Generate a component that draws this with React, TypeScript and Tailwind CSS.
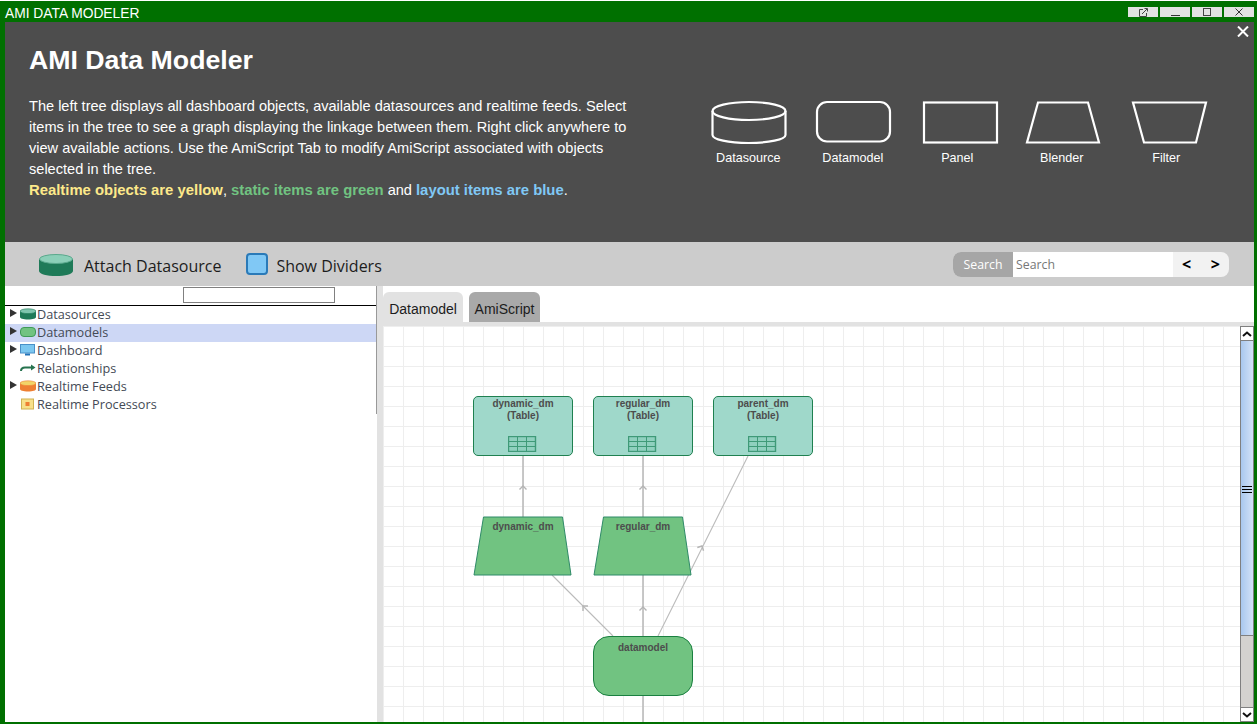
import { ReactNode } from "react";

const treeRows = [
  { label: "Datasources", arrow: true, icon: "datasource" },
  { label: "Datamodels", arrow: true, icon: "datamodel", selected: true },
  { label: "Dashboard", arrow: true, icon: "dashboard" },
  { label: "Relationships", arrow: false, icon: "relationship" },
  { label: "Realtime Feeds", arrow: true, icon: "feed" },
  { label: "Realtime Processors", arrow: false, icon: "processor" },
];

function TreeIcon({ name }: { name: string }) {
  if (name === "datasource" || name === "feed") {
    const top = name === "feed" ? "#f2d468" : "#7fc5ae";
    const body = name === "feed" ? "#ee7f33" : "#1f7a58";
    return (
      <svg width="16" height="12" viewBox="0 0 16 12">
        <path d="M0 3v6c0 1.5 3 2.5 8 2.5s8-1 8-2.5V3z" fill={body} />
        <ellipse cx="8" cy="3.2" rx="8" ry="2.4" fill={top} stroke={body} strokeWidth="0.6" />
      </svg>
    );
  }
  if (name === "datamodel") {
    return (
      <svg width="16" height="12" viewBox="0 0 16 12">
        <rect x="0.5" y="1.5" width="15" height="9" rx="3.5" fill="#71c381" stroke="#3f9a57" />
      </svg>
    );
  }
  if (name === "dashboard") {
    return (
      <svg width="16" height="12" viewBox="0 0 16 12">
        <rect x="0.5" y="0.5" width="14" height="8.5" fill="#7cc7f0" stroke="#4a90c8" />
        <rect x="5" y="9.5" width="5" height="2" fill="#2273b8" />
      </svg>
    );
  }
  if (name === "relationship") {
    return (
      <svg width="16" height="12" viewBox="0 0 16 12">
        <path d="M1 9c0-3 2-3.5 4-3.5h7" fill="none" stroke="#27734f" strokeWidth="2" />
        <path d="M11 2.5 15.5 5.5 11 8.5z" fill="#27734f" />
      </svg>
    );
  }
  return (
    <svg width="14" height="12" viewBox="0 0 14 12" className="ml-[1px]">
      <rect x="0.5" y="1" width="12" height="10" fill="#f7e08a" stroke="#d0b253" />
      <rect x="4.5" y="4" width="4" height="4" fill="#ee7f33" />
    </svg>
  );
}

function LegendItem({ label, children }: { label: string; children: ReactNode }) {
  return (
    <div className="flex w-[104.5px] flex-col items-center">
      <svg width="84" height="46" viewBox="0 0 84 46" fill="none" stroke="#ffffff" strokeWidth="2.2">
        {children}
      </svg>
      <span className="mt-[4px] text-[12.6px] leading-[16px] text-white">{label}</span>
    </div>
  );
}

function TableNode({ name, className }: { name: string; className: string }) {
  return (
    <div
      className={`absolute top-[70px] h-[60px] w-[100px] rounded-[5px] border border-[#1f8050] bg-[#9fd8ca] pt-[1px] text-center text-[10px] leading-[12px] font-bold text-[#4d4d4d] ${className}`}
    >
      <div>{name}</div>
      <div>(Table)</div>
      <svg className="absolute top-[39px] left-[34px]" width="29" height="16" viewBox="0 0 29 16" fill="none" stroke="#3f9a78">
        <rect x="0.5" y="0.5" width="27" height="15" fill="#8fd0be" strokeWidth="1.4" />
        <path d="M0 5.5h28M0 10.5h28M9.5 0v16M18.5 0v16" />
      </svg>
    </div>
  );
}

function BlenderNode({ name, className }: { name: string; className: string }) {
  return (
    <div className={`absolute top-[190px] h-[60px] w-[100px] text-center ${className}`}>
      <svg className="absolute top-0 left-0" width="100" height="60" viewBox="0 0 100 60">
        <path d="M10.5 1H89.5L98 59H1z" fill="#71c381" stroke="#2f8a68" />
      </svg>
      <span className="relative block pt-[5px] text-[10px] leading-[12px] font-bold text-[#4d4d4d]">{name}</span>
    </div>
  );
}

function Arrow({ x, y, angle }: { x: number; y: number; angle: number }) {
  return (
    <path
      d="M-3.5 3.5 0 0 3.5 3.5"
      fill="none"
      stroke="#b4b4b4"
      strokeWidth="1.4"
      transform={`translate(${x} ${y}) rotate(${angle})`}
    />
  );
}

export default function App() {
  return (
    <div
      className="flex h-[724px] w-[1257px] flex-col overflow-hidden bg-white pt-[1px] text-[#333]"
      style={{ fontFamily: '"Liberation Sans", Arial, sans-serif' }}
    >
      <div className="flex h-[723px] flex-col border-r-[3px] border-b-[2px] border-l-[5px] border-[#007000] bg-white">
        {/* window title */}
        <div className="-ml-[5px] flex h-[21px] shrink-0 items-center justify-between bg-[#007000] pl-[5px]">
          <span className="pt-[5px] text-[13.8px] leading-[22px] text-white">AMI DATA MODELER</span>
          <div className="mt-[1px] flex gap-[2px] text-[#333]">
            <div className="flex h-[10px] w-[30px] items-center justify-center bg-[#e2e2e2]">
              <svg width="9" height="9" viewBox="0 0 9 9" fill="none" stroke="#444">
                <path d="M4 1.5H.5v7h7V5M3 6l5-5M5.5.5h3v3" />
              </svg>
            </div>
            <div className="flex h-[10px] w-[30px] items-end justify-center bg-[#e2e2e2] pb-[1px]">
              <div className="h-[1px] w-[9px] bg-[#333]" />
            </div>
            <div className="flex h-[10px] w-[30px] items-center justify-center bg-[#e2e2e2]">
              <div className="h-[8px] w-[8px] border border-[#444]" />
            </div>
            <div className="flex h-[10px] w-[30px] items-center justify-center bg-[#e2e2e2]">
              <svg width="8" height="8" viewBox="0 0 8 8" stroke="#333">
                <path d="M.5.5l7 7M7.5.5l-7 7" />
              </svg>
            </div>
          </div>
        </div>

        {/* help banner */}
        <div className="relative flex h-[220px] shrink-0 bg-[#4d4d4d] text-white">
          <svg className="absolute top-[4px] right-[5px]" width="12" height="11" viewBox="0 0 12 11" stroke="#ffffff" strokeWidth="2">
            <path d="M1 .5l10 10M11 .5 1 10.500" />
          </svg>
          <div className="w-[640px] pt-[20px] pl-[24px]">
            <h1 className="text-[26.7px] leading-[36px] font-bold">AMI Data Modeler</h1>
            <p className="mt-[18px] text-[14.57px] leading-[21px]">
              The left tree displays all dashboard objects, available datasources and realtime feeds. Select
              <br />
              items in the tree to see a graph displaying the linkage between them. Right click anywhere to
              <br />
              view available actions. Use the AmiScript Tab to modify AmiScript associated with objects
              <br />
              selected in the tree.
              <br />
              <b className="text-[14.85px] text-[#fde98a]">Realtime objects are yellow</b>,{" "}
              <b className="text-[14.85px] text-[#71c381]">static items are green</b> and{" "}
              <b className="text-[14.85px] text-[#80c8f5]">layout items are blue</b>.
            </p>
          </div>
          <div className="absolute top-[78px] left-[691px] flex">
            <LegendItem label="Datasource">
              <path d="M6.500 11v24c0 4.500 16 8 36 8s37-3.500 37-8V11" />
              <ellipse cx="43" cy="11" rx="36.500" ry="9" />
            </LegendItem>
            <LegendItem label="Datamodel">
              <rect x="6" y="2" width="73" height="39.500" rx="10" />
            </LegendItem>
            <LegendItem label="Panel">
              <rect x="9" y="2.500" width="73" height="40" />
            </LegendItem>
            <LegendItem label="Blender">
              <path d="M18 2.500H68L79 42.500H7z" />
            </LegendItem>
            <LegendItem label="Filter">
              <path d="M9 2.500H82L72 42.500H20z" />
            </LegendItem>
          </div>
        </div>

        {/* toolbar */}
        <div
          className="flex h-[44px] shrink-0 items-center bg-[#cccccc] pr-[25px] pl-[34px] text-[16px] text-[#1c1c1c]"
          style={{ fontFamily: '"Open Sans", sans-serif' }}
        >
          <svg width="34" height="22" viewBox="0 0 34 22" className="mt-[1px]">
            <path d="M0 5v12c0 3 8 5 17 5s17-2 17-5V5z" fill="#1f7a58" />
            <ellipse cx="17" cy="5" rx="16.500" ry="4.500" fill="#8ccfb8" stroke="#5aa88c" />
          </svg>
          <span className="ml-[11px] pt-[3px]">Attach Datasource</span>
          <div className="ml-[25px] h-[22px] w-[22px] rounded-[4px] border-2 border-[#2a7ab8] bg-[#80c8f5]" />
          <span className="ml-[8px] pt-[3px]">Show Dividers</span>
          <div className="ml-auto flex h-[25px] w-[276px] overflow-hidden rounded-[8px] bg-[#f2f2f2] text-[12.3px]">
            <div className="flex w-[60px] items-center justify-center bg-[#a6a6a6] pt-[3px] text-white">Search</div>
            <div className="flex w-[160px] items-center bg-white pt-[3px] pl-[3px] text-[#777]">Search</div>
            <div className="flex flex-1 items-center justify-between pr-[9px] pl-[9px] text-[16px] font-bold text-black">
              <span>&lt;</span>
              <span>&gt;</span>
            </div>
          </div>
        </div>

        <div className="flex min-h-0 flex-1">
          {/* tree pane */}
          <div className="relative w-[372px] shrink-0 overflow-hidden">
            <div className="flex h-[20px] justify-start border-b border-black pt-[1px] pl-[178px]">
              <div className="h-[16px] w-[152px] border border-[#808080] bg-white" />
            </div>
            <div className="text-[12.7px] leading-[18px]" style={{ fontFamily: '"Open Sans", sans-serif' }}>
              {treeRows.map((row) => (
                <div
                  key={row.label}
                  className={`flex h-[18px] items-center pb-[2px] pl-[5px] text-[#444a55] ${row.selected ? "bg-[#cdd7f5]" : ""}`}
                >
                  <div className="mb-[3px] w-[10px]">
                    {row.arrow && (
                      <svg width="8" height="8" viewBox="0 0 8 8">
                        <path d="M0 0 7 4 0 8z" fill="#333" />
                      </svg>
                    )}
                  </div>
                  <div className="flex w-[17px] items-center">
                    <TreeIcon name={row.icon} />
                  </div>
                  <span>{row.label}</span>
                </div>
              ))}
            </div>
            <div className="absolute top-0 right-0 h-[128px] w-[1px] bg-[#999]" />
          </div>
          <div className="w-[6px] shrink-0 bg-[#e2e2e2]" />

          {/* graph pane */}
          <div className="flex min-w-0 flex-1 flex-col">
            <div className="flex h-[36px] shrink-0 items-end gap-[6px] bg-white text-[14px] text-[#1c1c1c]">
              <div className="flex h-[30px] w-[80px] items-center justify-center rounded-t-[6px] bg-[#e2e2e2] pt-[4px]">Datamodel</div>
              <div className="flex h-[30px] w-[71px] items-center justify-center rounded-t-[6px] bg-[#a9a9a9] pt-[4px]">AmiScript</div>
            </div>
            <div className="h-[4px] shrink-0 bg-[#e2e2e2]" />
            <div className="flex min-h-0 flex-1">
              <div className="relative flex-1 overflow-hidden bg-white bg-[linear-gradient(#eeeeee_1px,transparent_1px),linear-gradient(90deg,#eeeeee_1px,transparent_1px)] bg-[size:20px_20px] bg-[position:0_0,0_0]">
                <svg className="absolute top-0 left-0" width="857" height="396" viewBox="383 326 857 396" fill="none" stroke="#bbbbbb">
                  <path d="M523 456v61M643 456v61M643 575v61M643 696v26" strokeWidth="1.6" />
                  <path d="M748 456 658 636M552 575 613 636" strokeWidth="1.1" />
                  <Arrow x={523} y={486} angle={0} />
                  <Arrow x={643} y={486} angle={0} />
                  <Arrow x={643} y={607} angle={0} />
                  <Arrow x={702} y={546} angle={27} />
                  <Arrow x={583} y={606} angle={-45} />
                </svg>
                <TableNode name="dynamic_dm" className="left-[90px]" />
                <TableNode name="regular_dm" className="left-[210px]" />
                <TableNode name="parent_dm" className="left-[330px]" />
                <BlenderNode name="dynamic_dm" className="left-[90px]" />
                <BlenderNode name="regular_dm" className="left-[210px]" />
                <div className="absolute top-[310px] left-[210px] h-[60px] w-[100px] rounded-[16px] border border-[#1a8040] bg-[#71c381] pt-[5px] text-center text-[10px] leading-[12px] font-bold text-[#4d4d4d]">
                  datamodel
                </div>
              </div>

              {/* scrollbar */}
              <div className="flex w-[14px] shrink-0 flex-col bg-[#d4d2cf]">
                <div className="flex h-[15px] items-center justify-center border border-[#808080] bg-white">
                  <svg width="10" height="6" viewBox="0 0 10 6" fill="none" stroke="#111" strokeWidth="2">
                    <path d="M1 5 5 1.500 9 5" />
                  </svg>
                </div>
                <div className="flex h-[295px] items-center justify-center border-x border-b border-[#808080] bg-[linear-gradient(90deg,#a9c8ee,#d3e2f7)] pt-[3px]">
                  <div className="flex h-[7px] w-[10px] flex-col justify-between">
                    <div className="h-[1px] bg-black" />
                    <div className="h-[1px] bg-black" />
                    <div className="h-[1px] bg-black" />
                  </div>
                </div>
                <div className="flex-1 border-x border-[#808080]" />
                <div className="flex h-[15px] items-center justify-center border border-[#808080] bg-white">
                  <svg width="10" height="6" viewBox="0 0 10 6" fill="none" stroke="#111" strokeWidth="2">
                    <path d="M1 1 5 4.500 9 1" />
                  </svg>
                </div>
              </div>
            </div>
          </div>
        </div>
      </div>
    </div>
  );
}
